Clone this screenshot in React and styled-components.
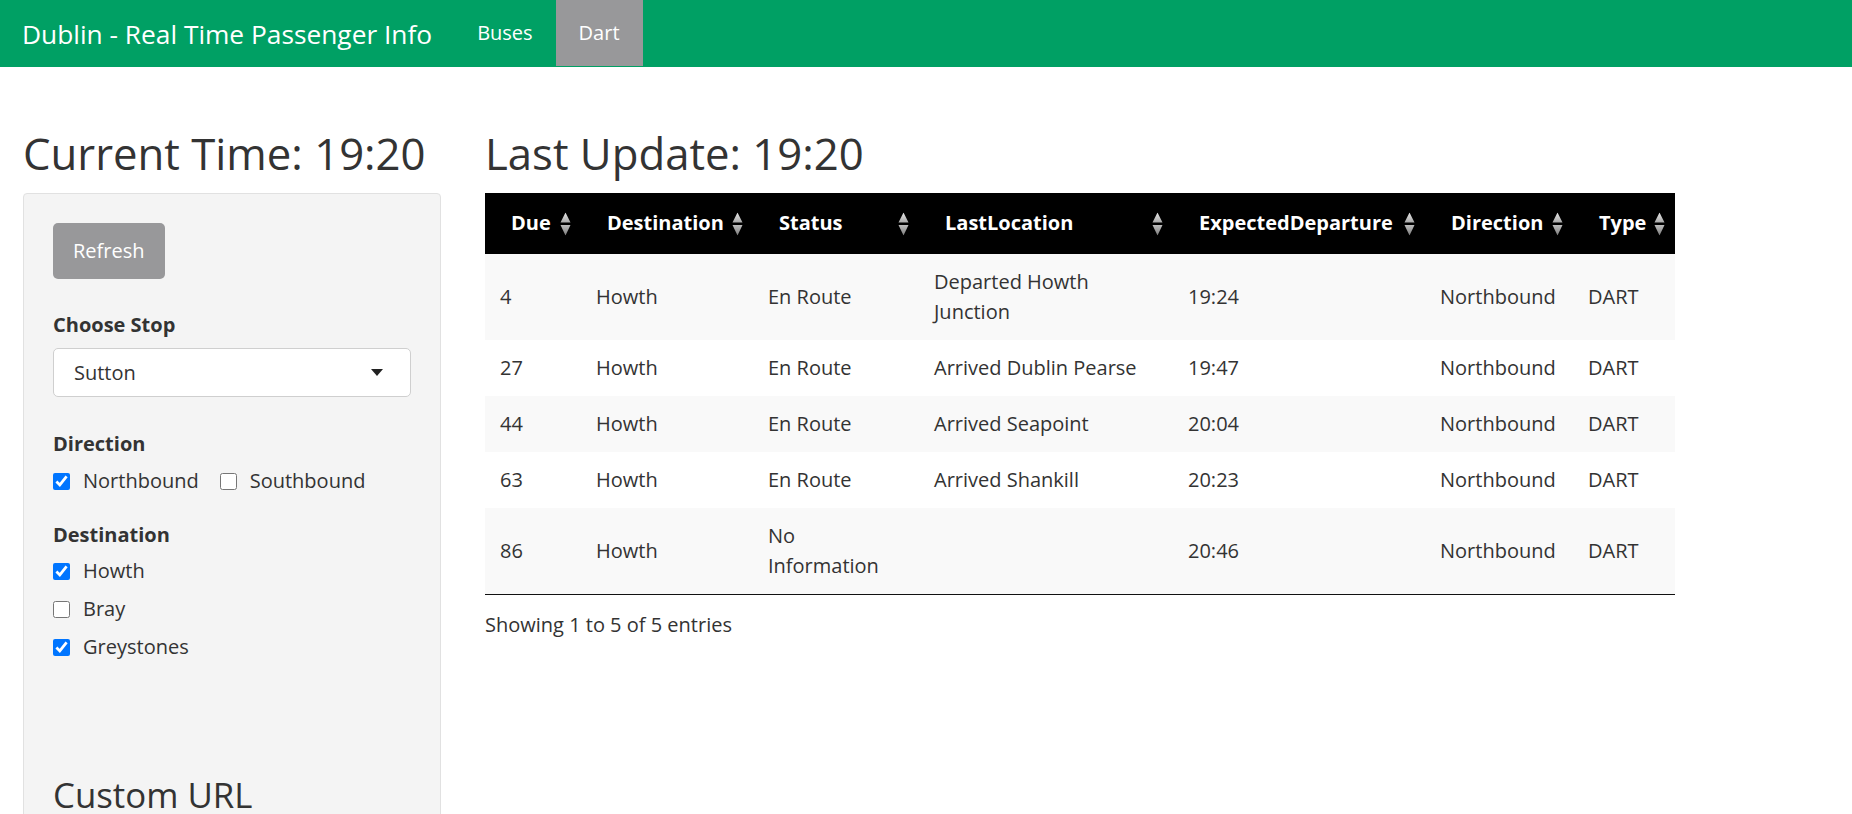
import styled, { createGlobalStyle } from 'styled-components';

const GlobalStyle = createGlobalStyle`
  body {
    margin: 0;
    background: #fff;
    color: #333;
    font-family: "Open Sans", "Noto Sans", sans-serif;
    font-size: 20px;
    line-height: 30px;
  }

  * {
    box-sizing: border-box;
  }
`;

const NavBar = styled.nav`
  display: flex;
  align-items: flex-start;
  height: 67px;
  background: #00a064;
`;

const Brand = styled.a`
  display: flex;
  align-items: center;
  height: 67px;
  padding: 0 22px;
  color: #fff;
  font-size: 26.3px;
  text-decoration: none;
`;

const NavLink = styled.a`
  display: flex;
  align-items: center;
  height: 66px;
  padding: 0 23px;
  color: #fff;
  font-size: 20px;
  text-decoration: none;
  background: ${(props) => (props.$active ? '#98989a' : 'transparent')};
`;

const Page = styled.main`
  display: flex;
  align-items: flex-start;
  gap: 44px;
  padding: 60px 23px 0;
`;

const Sidebar = styled.aside`
  flex: 0 0 418px;
`;

const Content = styled.section`
  flex: 1;
`;

const Heading = styled.h2`
  margin: 0 0 14px;
  font-size: 43.7px;
  font-weight: 400;
  line-height: 52px;
  color: #333;
`;

const Well = styled.div`
  padding: 29px;
  background: #f4f4f4;
  border: 1px solid #e1e1e1;
  border-radius: 4px;
  min-height: 640px;
`;

const Button = styled.button`
  display: block;
  height: 56px;
  padding: 0 20px;
  border: none;
  border-radius: 5px;
  background: #98989a;
  color: #fff;
  font-family: inherit;
  font-size: 20px;
  line-height: 30px;
`;

const Group = styled.div`
  margin-top: ${(props) => props.$gap}px;
`;

const Label = styled.div`
  font-weight: 700;
  margin-bottom: ${(props) => props.$after || 0}px;
`;

const SelectWrap = styled.div`
  position: relative;

  &::after {
    content: '';
    position: absolute;
    right: 28px;
    top: 21px;
    border-left: 6.5px solid transparent;
    border-right: 6.5px solid transparent;
    border-top: 7px solid #222;
    pointer-events: none;
  }
`;

const Select = styled.select`
  display: block;
  width: 100%;
  height: 49px;
  padding: 0 20px;
  appearance: none;
  background: #fff;
  border: 1px solid #cfcfcf;
  border-radius: 5px;
  color: #333;
  font-family: inherit;
  font-size: 20px;
`;

const CheckRow = styled.div`
  display: flex;
  flex-direction: ${(props) => (props.$inline ? 'row' : 'column')};
  gap: ${(props) => (props.$inline ? '0 21px' : '8px')};
  margin-top: ${(props) => props.$gap}px;
`;

const Check = styled.label`
  display: flex;
  align-items: center;
  gap: 13px;
  height: 30px;
  color: #333;

  input {
    width: 17px;
    height: 17px;
    margin: 0;
    accent-color: #0075ff;
  }
`;

const SubHeading = styled.h3`
  margin: 112px 0 0;
  font-size: 34.8px;
  font-weight: 400;
  line-height: 41px;
  color: #333;
`;

const Table = styled.table`
  width: 1190px;
  border-collapse: collapse;
  table-layout: fixed;
  border-bottom: 1px solid #111;
`;

const Th = styled.th`
  position: relative;
  padding: 15px 30px 16px 26px;
  background: #000;
  color: #fff;
  font-weight: 700;
  text-align: left;
  white-space: nowrap;
`;

const SortIcon = styled.svg`
  position: absolute;
  right: 10px;
  top: 50%;
  transform: translateY(-50%);
`;

const Row = styled.tr`
  background: ${(props) => (props.$odd ? '#f9f9f9' : '#fff')};

  & + & td {
    border-top: 1px solid #ddd;
  }
`;

const Td = styled.td`
  padding: 13px 15px;
  vertical-align: middle;
  color: #333;
`;

const Info = styled.div`
  padding-top: 15px;
  color: #333;
`;

const columns = [
  { title: 'Due', width: 96 },
  { title: 'Destination', width: 172 },
  { title: 'Status', width: 166 },
  { title: 'LastLocation', width: 254 },
  { title: 'ExpectedDeparture', width: 252 },
  { title: 'Direction', width: 148 },
  { title: 'Type', width: 102 },
];

const trains = [
  ['4', 'Howth', 'En Route', 'Departed Howth Junction', '19:24', 'Northbound', 'DART'],
  ['27', 'Howth', 'En Route', 'Arrived Dublin Pearse', '19:47', 'Northbound', 'DART'],
  ['44', 'Howth', 'En Route', 'Arrived Seapoint', '20:04', 'Northbound', 'DART'],
  ['63', 'Howth', 'En Route', 'Arrived Shankill', '20:23', 'Northbound', 'DART'],
  ['86', 'Howth', 'No Information', '', '20:46', 'Northbound', 'DART'],
];

function Sort() {
  return (
    <SortIcon width="11" height="23" viewBox="0 0 11 23">
      <defs>
        <linearGradient id="sortUp" x1="0" y1="0" x2="0" y2="1">
          <stop offset="0" stopColor="#e6e6e6" />
          <stop offset="1" stopColor="#a9a9a9" />
        </linearGradient>
        <linearGradient id="sortDown" x1="0" y1="0" x2="0" y2="1">
          <stop offset="0" stopColor="#bdbdbd" />
          <stop offset="1" stopColor="#7c7c7c" />
        </linearGradient>
      </defs>
      <polygon points="0.5,10 5.5,0 10.5,10" fill="url(#sortUp)" />
      <polygon points="0.5,12.5 10.5,12.5 5.5,23" fill="url(#sortDown)" />
    </SortIcon>
  );
}

export default function App() {
  return (
    <>
      <GlobalStyle />
      <NavBar>
        <Brand href="#">Dublin - Real Time Passenger Info</Brand>
        <NavLink href="#">Buses</NavLink>
        <NavLink href="#" $active>Dart</NavLink>
      </NavBar>
      <Page>
        <Sidebar>
          <Heading>Current Time: 19:20</Heading>
          <Well>
            <Button type="button">Refresh</Button>
            <Group $gap={31}>
              <Label $after={8}>Choose Stop</Label>
              <SelectWrap>
                <Select defaultValue="Sutton">
                  <option>Sutton</option>
                  <option>Howth</option>
                  <option>Bray</option>
                </Select>
              </SelectWrap>
            </Group>
            <Group $gap={32}>
              <Label>Direction</Label>
              <CheckRow $inline $gap={7}>
                <Check>
                  <input type="checkbox" defaultChecked />
                  Northbound
                </Check>
                <Check>
                  <input type="checkbox" />
                  Southbound
                </Check>
              </CheckRow>
            </Group>
            <Group $gap={24}>
              <Label>Destination</Label>
              <CheckRow $gap={6}>
                <Check>
                  <input type="checkbox" defaultChecked />
                  Howth
                </Check>
                <Check>
                  <input type="checkbox" />
                  Bray
                </Check>
                <Check>
                  <input type="checkbox" defaultChecked />
                  Greystones
                </Check>
              </CheckRow>
            </Group>
            <SubHeading>Custom URL</SubHeading>
          </Well>
        </Sidebar>
        <Content>
          <Heading>Last Update: 19:20</Heading>
          <Table>
            <colgroup>
              {columns.map((c) => <col key={c.title} style={{ width: c.width }} />)}
            </colgroup>
            <thead>
              <tr>
                {columns.map((c) => (
                  <Th key={c.title}>
                    {c.title}
                    <Sort />
                  </Th>
                ))}
              </tr>
            </thead>
            <tbody>
              {trains.map((row, i) => (
                <Row key={row[0]} $odd={i % 2 === 0}>
                  {row.map((cell, j) => <Td key={columns[j].title}>{cell}</Td>)}
                </Row>
              ))}
            </tbody>
          </Table>
          <Info>Showing 1 to 5 of 5 entries</Info>
        </Content>
      </Page>
    </>
  );
}
